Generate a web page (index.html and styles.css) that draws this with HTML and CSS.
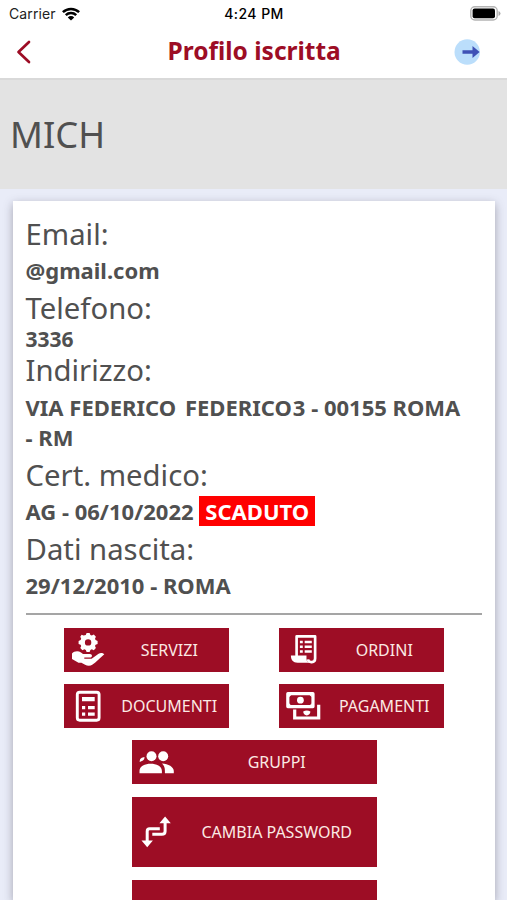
FILE: index.html
```html
<!DOCTYPE html>
<html lang="it">
<head>
<meta charset="utf-8">
<title>Profilo iscritta</title>
<link rel="stylesheet" href="styles.css">
</head>
<body>
<header class="topbar">
  <div class="status">
    <div class="carrier"><span>Carrier</span>
      <svg width="18" height="14" viewBox="0 0 18 14"><g fill="none" stroke="#000" stroke-width="2.5"><path d="M.9 5.2a11.6 11.6 0 0 1 16.2 0"/><path d="M3.8 8.2a7.4 7.4 0 0 1 10.4 0"/></g><path d="M5.8 10.4a4.5 4.5 0 0 1 6.4 0L9 13.6z"/></svg>
    </div>
    <span class="time">4:24 PM</span>
    <svg class="battery" width="31" height="15" viewBox="0 0 31 15"><rect x=".8" y=".8" width="26.4" height="13.2" rx="4" fill="#fff" stroke="#b4b4b4" stroke-width="1.4"/><rect x="2.6" y="2.6" width="22.4" height="9.6" rx="2"/><path d="M28.5 5v5q2-.8 2-2.5t-2-2.5" fill="#aaa"/></svg>
  </div>
  <nav class="nav">
    <svg class="back" width="16" height="24" viewBox="0 0 16 24"><path d="M14 2 3.5 12 14 22" fill="none" stroke="#9d0d25" stroke-width="2.7" stroke-linecap="round" stroke-linejoin="round"/></svg>
    <h1 class="title">Profilo iscritta</h1>
    <svg class="exit" width="28" height="26" viewBox="0 0 28 26"><circle cx="13.2" cy="13" r="12.7" fill="#bbdefb"/><path d="M8.5 11.2h10V7L25.6 13l-7.1 6v-4.2h-10z" fill="#3f51b5"/></svg>
  </nav>
</header>
<section class="hero">MICH</section>
<main class="card">
  <dl class="details">
    <dt>Email:</dt><dd>@gmail.com</dd>
    <dt>Telefono:</dt><dd class="phone">3336</dd>
    <dt>Indirizzo:</dt><dd class="address">VIA FEDERICO <span class="street">FEDERICO</span>3 - 00155 ROMA <span class="province">- RM</span></dd>
    <dt>Cert. medico:</dt><dd>AG - 06/10/2022 <span class="expired">SCADUTO</span></dd>
    <dt>Dati nascita:</dt><dd>29/12/2010 - ROMA</dd>
  </dl>
  <hr class="rule">
  <div class="pairs">
    <a class="btn"><svg class="icon" viewBox="0 0 36 36"><g fill="#fff"><path fill-rule="evenodd" transform="translate(-.6 .7)" d="m16.4 2.2.8-2h3l.8 2 1.4.6 2-.9 2.1 2.1-.9 2 .6 1.4 2 .8v3l-2 .8-.6 1.4.9 2-2.1 2.1-2-.9-1.4.6-.8 2h-3l-.8-2-1.4-.6-2 .9-2.1-2.1.9-2-.6-1.4-2-.8v-3l2-.8.6-1.4-.9-2L12.2 2l2 .9zM18.7 6.5a3.2 3.2 0 1 0 0 6.4 3.2 3.2 0 0 0 0-6.4"/><path d="M2 21.5c2-2.3 6-3 9-1l2 1.5h7c2.3 0 2.7 3.1.5 3.6h-6.2v1.2h7.3l7-5c2-1.4 4.3-.8 5.7.5L25 30.7c-2 1.5-3.3 3.1-6.2 3.1-2.5 0-5-1.5-7.4-3H8.5L2 27z"/></g></svg><span>SERVIZI</span></a>
    <a class="btn"><svg class="icon" viewBox="0 0 36 36"><g transform="translate(4 .6) scale(.95)"><path d="M8 25V4h19.5v23.2c0 5-6.8 5-7.5 1" fill="none" stroke="#fff" stroke-width="2.8" stroke-linejoin="round"/><path d="M2 24.2h16.4v3.2c0 2.5 1.6 4.4 5 4.4H9c-4.7 0-7-3-7-7.6" fill="#fff"/><path d="M11.5 10h3m2 0h7.5M11.5 15h3m2 0h7.5M11.5 20h3m2 0h7.5" stroke="#fff" stroke-width="2.6"/></g></svg><span>ORDINI</span></a>
    <a class="btn"><svg class="icon" viewBox="0 0 36 36"><rect x="7.3" y="4.2" width="21.8" height="28" rx="2.4" fill="none" stroke="#fff" stroke-width="2.9"/><path d="M12 9h12.7v4.3H12zM12 18h3.2v3.2H12zM18 18h6.7v3.2H18zM12 24.5h3.2v3.2H12zM18 24.5h6.7v3.2H18z" fill="#fff"/></svg><span>DOCUMENTI</span></a>
    <a class="btn"><svg class="icon pay" viewBox="0 0 36 36"><g fill="none" stroke="#fff" stroke-width="3.2" stroke-linejoin="round"><path d="M2.8 5.7h25.2v12.9H2.8z"/><path stroke-linejoin="miter" d="M9.7 21.5V30h24V16.7"/></g><circle cx="15.4" cy="12.2" r="3.4" fill="#fff"/><path d="M18.2 23.4q3.6-1.8 7.2 0c0 2.2-1.6 3.6-3.6 4.2-2-.6-3.6-2-3.6-4.2M4 7v2.2L6.2 7zM26.8 7v2.2L24.6 7zM4 17.4v-2.2l2.2 2.2zM26.8 17.4v-2.2l-2.2 2.2z" fill="#fff"/></svg><span>PAGAMENTI</span></a>
  </div>
  <div class="stack">
    <a class="btn wide"><svg class="icon" viewBox="0 0 36 36"><g fill="#fff"><circle cx="13.5" cy="12.3" r="5"/><circle cx="25.2" cy="12.3" r="5"/><path d="M1.5 29.3v-2.4c0-9.4 22.4-9.4 22.4 0v2.4zM24 19.4c6.3.3 11.8 3.4 11.8 7.5v2.4h-8.9v-2.4c0-3.2-.5-5.2-2.9-7.5M1.8 18q-.6-2.9 2-4.2l2.6-.9q.4 2.2-1.4 3.7z"/></g></svg><span>GRUPPI</span></a>
    <a class="btn wide tall"><svg class="icon" viewBox="0 0 36 36"><path d="M9.2 28V17.3q0-2.5 2.5-2.5h10.1M14.3 20.2h9.5q3.3 0 3.3-3V9" fill="none" stroke="#fff" stroke-width="3"/><path d="m21.4 9.2 5.7-6.7 5.7 6.7zM3.5 26.6l5.7 6.7 5.7-6.7z" fill="#fff"/></svg><span>CAMBIA PASSWORD</span></a>
    <a class="btn wide tall"></a>
  </div>
</main>
</body>
</html>
```
FILE: styles.css
```css
* { box-sizing: border-box; }
body {
  margin: 0;
  height: 900px;
  overflow: hidden;
  background: #e9ecf8;
  color: #505050;
  font-family: "Noto Sans", sans-serif;
}
svg { display: block; }
.topbar {
  height: 80px;
  background: #fff;
  border-bottom: 2px solid #d9d9d9;
}
.status {
  display: grid;
  grid-template-columns: 1fr auto 1fr;
  align-items: center;
  height: 27px;
  padding: 0 6px 0 7px;
  font-family: Inter, sans-serif;
  font-size: 14px;
  color: #222;
}
.carrier { display: flex; align-items: center; gap: 6px; padding-left: 2px; letter-spacing: .1px; }
.time { font-size: 14px; font-weight: 500; letter-spacing: .45px; color: #000; }
.battery { justify-self: end; }
.nav {
  display: grid;
  grid-template-columns: 152.5px 1fr auto;
  align-items: center;
  height: 50px;
  padding: 0 25px 0 15px;
}
.title {
  margin: 0 0 3px;
  font-size: 24.5px;
  line-height: 45px;
  white-space: nowrap;
  color: #9d0d25;
}
.hero {
  height: 109px;
  padding: 0 10px;
  background: #e3e3e3;
  font-size: 36.3px;
  line-height: 109px;
}
.card {
  height: 699px;
  margin: 12px 12px 0 13px;
  padding: 12px 13px 0 12.5px;
  overflow: hidden;
  background: #fff;
  box-shadow: 0 3px 9px rgba(60, 55, 70, .4);
}
.details { margin: 0; }
dt { font-size: 29.3px; line-height: 42px; }
dd {
  margin: 0;
  padding: 0 0 2px;
  font-size: 22px;
  font-weight: 700;
  line-height: 30px;
}
.phone { padding: 0; font-size: 21px; line-height: 20px; }
.address { padding: .5px 0 2.5px; }
.street { margin: 0 1px 0 3px; }
.province { display: block; }
.expired {
  display: inline-block;
  padding: 0 6px;
  background: #f00;
  color: #fff;
}
.rule {
  height: 2px;
  margin: 11px 0 13px;
  border: 0;
  background: #a5a5a5;
}
.pairs {
  display: grid;
  grid-template-columns: 165px 165px;
  column-gap: 50px;
  row-gap: 12px;
  margin-left: 38.5px;
}
.btn {
  display: flex;
  align-items: center;
  height: 44px;
  padding: 0 6px;
  background: #9d0d25;
  color: #fbe9e4;
  font-size: 16px;
}
.btn span { flex: 1; padding-left: 9.5px; text-align: center; }
.icon { flex: none; width: 36px; height: 36px; }
.stack {
  display: flex;
  flex-direction: column;
  gap: 13px;
  width: 245px;
  margin: 12px 0 0 106px;
}
.tall { height: 70px; }
```
